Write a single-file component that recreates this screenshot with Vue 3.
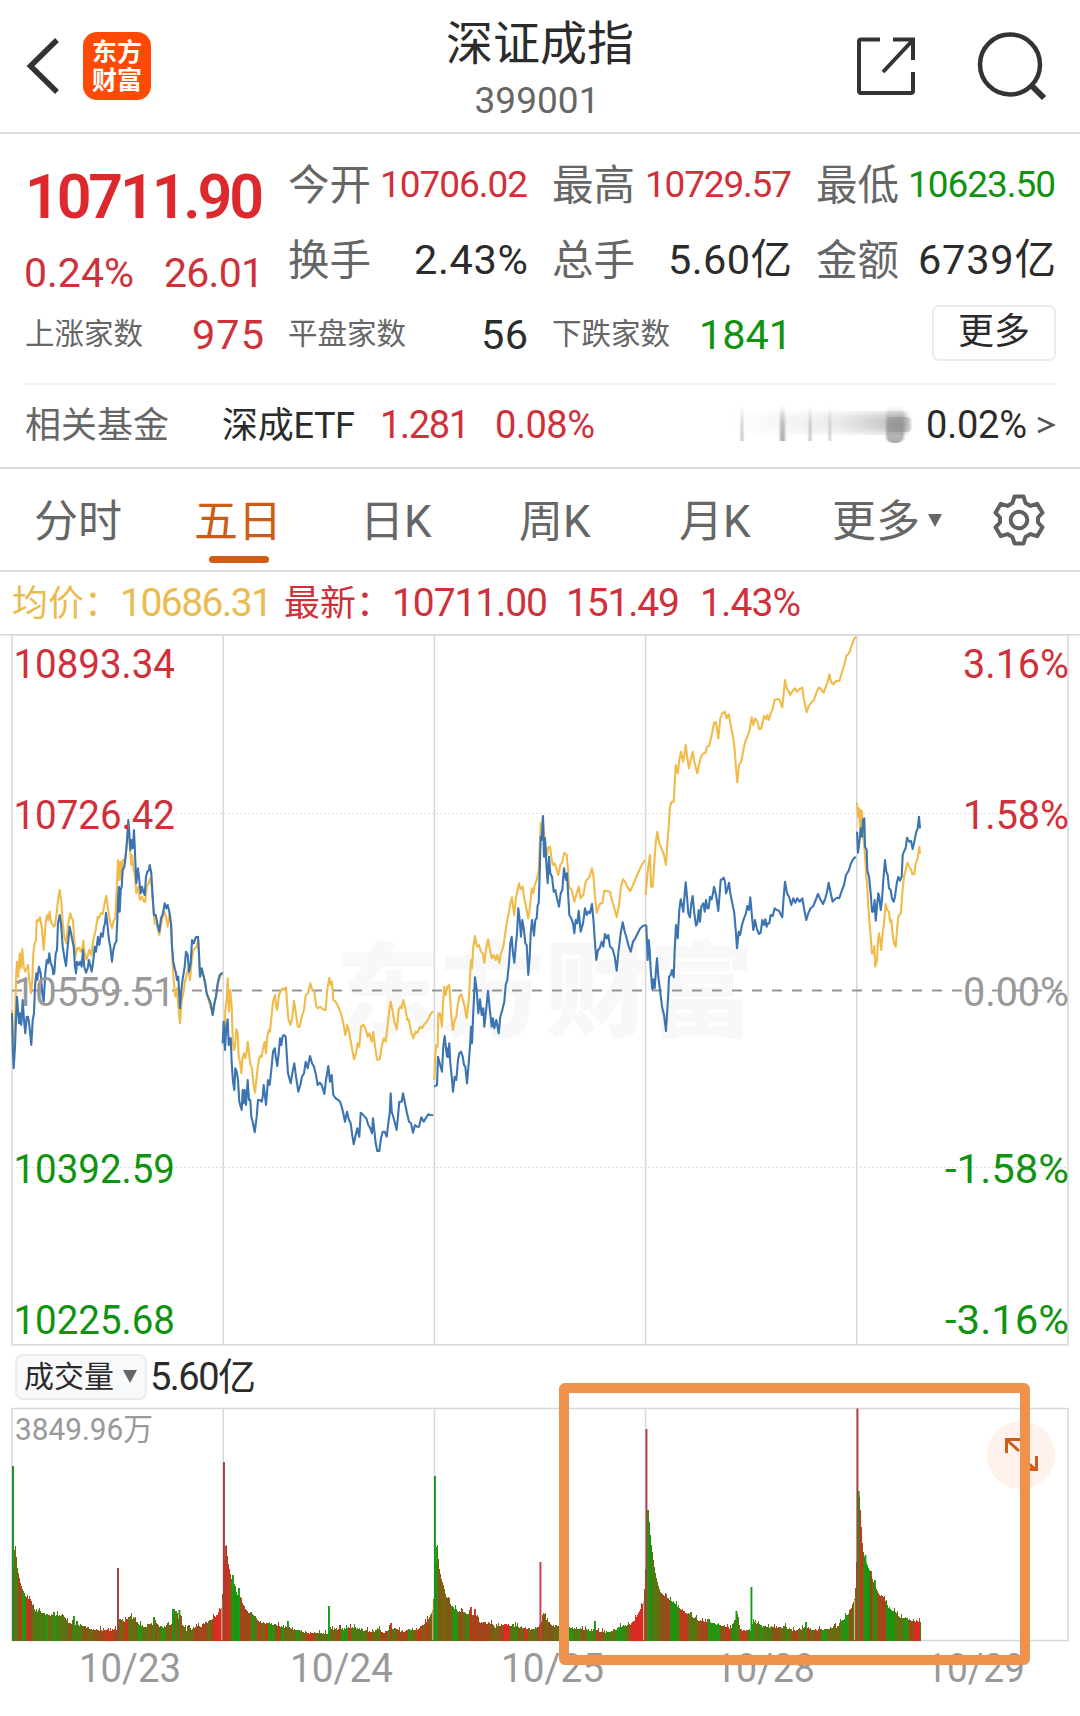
<script setup>
const place = (el, width) => {
  el.style.letterSpacing = '0px'
  el.style.marginRight = '0px'
  const n = Array.from(el.textContent).length
  const extra = (width - el.getBoundingClientRect().width) / (n - 1)
  el.style.letterSpacing = extra + 'px'
  el.style.marginRight = -extra + 'px'
}
// Tracks a run of text so that it fills the given width
const vFit = { mounted: (el, b) => place(el, b.value) }

const quotes = [
  { label: '今开', value: '10706.02', w: 148, tone: 'up', size: 'mid' },
  { label: '最高', value: '10729.57', w: 147, tone: 'up', size: 'mid' },
  { label: '最低', value: '10623.50', w: 148, tone: 'down', size: 'mid' },
  { label: '换手', value: '2.43%', w: 114, tone: '', size: 'big' },
  { label: '总手', value: '5.60亿', w: 124, tone: '', size: 'big' },
  { label: '金额', value: '6739亿', w: 138, tone: '', size: 'big' },
]

const left = 12
const right = 1068
const dayLines = [223.2, 434.4, 645.6, 856.8]

// Each session: origin plus samples in thirds of a pixel
const sessions = [
  {
    ox: 0, oy: 780,
    avg: '36,690 41,850 45,740 48,600 51,545 55,590 59,520 63,565 67,508 71,560 76,575 80,565 84,555 88,600 93,640 97,600 100,520 104,490 108,480 110,420 114,425 120,412 125,440 131,510 137,425 142,405 145,420 149,395 153,425 161,440 165,435 170,400 174,360 179,330 184,365 188,430 193,470 199,490 205,430 211,400 215,415 219,420 222,470 226,530 232,505 238,503 242,515 246,510 250,482 254,520 260,540 267,510 274,525 280,480 287,450 293,410 297,415 302,400 308,402 313,375 319,347 324,385 330,425 336,445 340,425 346,415 350,330 354,240 357,300 361,245 364,300 368,240 374,240 380,200 386,140 391,220 394,255 397,225 400,260 405,290 409,340 415,320 420,360 426,350 432,365 436,365 440,320 446,310 450,295 455,320 460,390 464,430 470,435 478,465 484,430 492,395 498,410 503,440 509,400 514,440 517,530 521,600 526,650 531,625 535,680 540,730 545,660 550,640 556,600 561,580 565,565 570,600 575,540 580,510 590,500 595,480 597,530 600,590 605,570 611,590 620,640 638,705 645,665 653,615 660,590 668,580',
    price: '36,700 38,800 41,865 45,800 48,720 51,650 54,690 57,730 60,700 64,735 68,660 72,720 76,760 80,710 84,710 88,735 94,795 98,720 102,700 105,620 109,580 112,600 117,560 122,580 127,640 131,665 136,580 140,540 144,550 148,520 152,550 157,560 160,583 163,580 167,520 171,510 174,430 179,405 183,430 188,500 193,530 198,558 203,500 209,440 213,460 217,480 221,500 225,560 228,580 231,545 236,555 241,545 245,560 249,510 253,560 258,578 263,565 267,540 275,575 279,550 284,500 288,515 294,470 298,495 303,460 308,470 312,440 315,430 318,398 322,430 327,480 331,500 336,545 340,510 345,490 349,485 352,420 355,340 357,320 359,395 362,330 365,320 368,270 373,260 377,230 381,180 385,120 388,160 391,210 395,180 398,205 402,150 405,220 409,310 414,265 418,300 422,340 426,320 430,335 434,345 438,290 442,275 447,270 449,255 454,280 458,350 462,405 467,405 472,430 478,455 483,415 489,400 494,370 499,385 503,375 508,395 513,430 516,500 520,545 524,565 528,580 531,600 535,590 540,685 545,620 549,590 554,560 558,515 563,525 567,575 572,550 576,480 581,490 587,472 594,470 597,520 600,590 605,565 611,590 616,610 620,640 626,655 632,670 638,705 643,670 648,650 653,610 659,585 668,578',
  },
  {
    ox: 215, oy: 930,
    avg: '26,345 29,300 31,240 35,210 38,145 42,245 46,180 50,230 53,330 56,360 60,350 64,298 68,310 71,380 75,395 79,430 83,380 87,370 91,385 95,365 98,335 102,370 106,400 111,415 115,460 120,488 125,440 129,405 134,378 140,380 145,350 149,335 153,370 157,320 161,300 165,305 169,265 174,215 180,195 184,230 187,240 192,195 197,183 203,175 208,180 213,172 216,215 220,265 226,285 232,265 237,212 242,245 248,290 254,290 260,260 267,240 272,195 279,190 286,160 292,180 298,185 304,230 309,235 315,230 321,235 328,240 332,240 336,185 343,143 347,165 351,155 355,210 362,215 370,230 378,250 385,280 391,315 397,285 403,310 410,350 417,388 423,370 428,340 433,350 438,290 446,285 453,300 458,320 463,310 470,335 475,305 480,350 487,390 494,388 500,350 506,325 512,335 518,285 523,240 527,215 533,245 538,275 545,298 551,240 556,230 560,235 565,210 571,235 577,270 581,268 588,305 595,325 602,305 608,308 615,290 621,295 628,283 635,275 641,265 648,250 655,244',
    price: '23,340 26,275 30,360 34,290 38,268 41,345 44,325 47,325 50,400 54,455 58,480 61,415 65,425 69,450 73,515 80,540 83,480 86,520 89,480 93,525 98,450 102,510 106,510 109,560 113,575 119,607 125,560 129,510 134,510 140,515 143,500 146,465 153,525 159,450 164,465 169,420 174,365 179,355 183,385 187,408 191,370 195,325 199,345 203,318 207,315 212,320 215,370 219,430 227,460 232,430 238,400 243,440 250,485 256,465 261,440 267,430 272,395 278,415 285,378 291,400 297,410 303,435 308,465 314,458 320,465 328,492 333,450 340,408 345,455 350,435 355,495 362,505 370,510 375,515 380,530 385,550 390,575 396,545 402,570 407,580 411,610 416,643 421,620 427,595 433,620 437,548 443,553 449,560 454,565 460,585 466,595 471,610 474,565 478,600 482,640 487,663 493,663 498,625 503,605 509,605 515,620 521,570 524,550 527,490 530,545 535,560 540,580 545,600 549,560 553,515 560,515 564,490 570,520 576,550 582,575 588,580 594,608 600,585 606,590 612,590 619,562 626,575 632,565 640,553 646,555 655,556',
  },
  {
    ox: 425, oy: 790,
    avg: '28,870 31,800 34,765 38,770 40,670 45,670 51,710 54,640 58,590 62,615 67,590 73,585 77,650 80,690 84,720 89,690 94,680 98,645 103,620 109,612 114,630 119,650 125,685 129,650 132,620 135,560 138,510 141,535 145,470 150,438 156,470 162,465 168,485 173,490 178,518 183,480 189,448 194,475 200,505 206,495 212,510 217,495 223,520 228,490 235,470 240,435 246,395 252,365 256,340 261,322 264,350 268,375 273,320 278,300 282,280 287,298 293,290 297,320 303,350 310,385 315,350 320,295 325,310 329,285 335,270 341,240 344,170 347,100 350,130 353,80 358,140 361,160 366,195 370,172 375,170 379,200 383,225 389,220 394,235 400,255 406,225 411,218 418,188 425,195 429,240 432,290 440,300 448,335 455,310 461,290 467,325 475,315 482,275 487,268 493,262 501,235 506,265 510,320 515,368 520,355 526,340 532,340 538,302 545,303 555,305 562,335 568,355 575,382 582,345 588,290 594,268 600,275 606,290 616,303 624,285 632,265 641,245 650,225 660,210',
    price: '28,890 36,885 39,800 44,820 51,845 55,770 59,738 63,775 66,800 68,775 70,802 73,760 76,820 80,860 84,905 89,860 94,870 99,810 103,790 108,785 113,800 117,825 121,830 126,880 131,820 135,770 138,710 141,760 145,665 150,562 155,600 160,670 165,628 170,675 175,655 178,710 184,655 189,602 194,655 200,710 204,685 208,715 214,690 221,730 226,680 232,660 238,635 242,585 247,570 252,520 256,460 260,440 264,490 268,518 273,460 276,430 280,355 284,390 288,440 292,390 297,420 301,460 305,465 310,555 314,500 317,430 321,390 327,437 331,390 335,385 338,345 341,340 344,250 347,140 350,150 354,78 357,200 360,145 364,220 368,280 372,200 376,250 381,260 386,305 391,300 396,325 402,350 407,310 412,300 417,235 423,270 426,250 430,320 433,375 439,385 444,400 448,430 452,390 457,400 461,362 467,425 474,400 480,355 485,375 490,365 495,370 501,342 506,400 510,460 514,510 519,480 524,475 530,455 535,470 540,432 545,445 550,435 555,470 562,475 569,500 575,542 580,490 587,430 593,397 599,425 604,440 610,465 617,485 624,455 631,445 638,430 646,415 655,407 664,405',
  },
  {
    ox: 640, oy: 630,
    avg: '17,795 22,735 25,710 30,675 33,770 38,770 43,700 47,640 52,605 58,640 66,660 72,675 78,705 82,640 86,590 90,530 95,515 101,515 104,460 107,405 113,430 118,390 123,365 129,395 133,375 137,345 142,385 147,415 152,390 158,365 163,395 172,430 178,400 184,378 190,370 196,370 201,350 207,348 213,325 218,300 222,278 228,277 235,325 241,265 247,250 254,245 260,265 266,253 272,285 279,320 284,360 288,415 292,457 297,405 304,395 311,355 317,330 323,318 329,298 335,262 340,285 346,265 352,275 358,298 364,295 372,258 378,268 382,255 386,270 392,250 398,235 404,210 412,207 418,208 427,232 431,190 435,150 440,175 446,183 451,195 458,182 465,175 471,185 478,178 487,173 492,210 500,247 506,228 512,220 522,210 530,185 537,172 543,178 551,188 558,168 563,155 568,133 573,155 580,163 588,153 598,153 605,130 612,108 619,78 627,70 634,50 642,28 648,20',
    price: '19,886 23,990 26,930 29,960 32,1020 37,1078 40,1048 44,1075 48,1020 51,985 55,1040 60,1080 66,1130 72,1155 78,1203 82,1140 85,1090 87,1040 92,1035 96,1020 101,1042 104,960 108,885 113,925 118,840 122,808 126,825 130,845 134,790 137,757 141,800 145,850 150,862 154,820 158,798 163,850 168,887 172,880 176,840 180,875 184,830 190,820 194,845 198,810 202,835 206,835 210,800 215,808 219,790 222,770 228,795 235,843 239,790 242,750 247,748 251,743 255,755 258,790 263,775 267,758 271,790 277,820 283,850 287,900 291,955 296,905 300,915 306,885 312,865 318,850 322,828 327,840 331,802 335,850 340,900 345,870 350,895 357,912 362,908 367,870 372,885 376,868 380,890 384,880 388,880 392,855 398,858 404,835 410,840 417,842 427,862 431,800 435,755 441,790 447,800 454,825 460,805 466,818 472,805 479,815 487,805 493,840 499,870 505,850 512,835 520,828 527,810 534,792 541,808 549,822 556,805 560,790 566,758 572,790 578,815 584,808 592,803 598,805 606,780 612,765 618,735 626,722 633,700 640,687 647,680',
  },
  {
    ox: 840, oy: 780,
    avg: '51,68 54,110 57,85 60,150 63,90 66,95 68,150 72,190 76,240 79,290 82,320 85,380 88,420 92,470 96,520 101,520 103,498 106,560 111,540 114,480 117,460 120,480 124,510 128,455 132,430 137,372 141,390 147,395 150,425 154,420 158,465 162,490 167,500 171,450 175,410 183,398 187,340 192,290 197,270 202,248 208,260 213,268 217,283 223,283 227,250 233,235 238,200 240,222',
    price: '51,155 54,218 58,190 61,155 63,145 66,170 69,120 73,115 75,200 80,210 82,270 87,290 92,340 96,395 100,395 104,360 107,422 111,380 115,340 118,350 122,390 126,360 130,300 135,240 139,275 143,285 147,325 152,330 156,355 161,365 165,350 170,310 175,290 180,302 185,290 188,225 193,212 197,205 201,173 208,185 213,183 218,207 223,185 229,155 233,145 237,110 240,145',
  },
]
const trace = (s, key) =>
  s[key].split(' ').map((p) => {
    const [x, y] = p.split(',').map(Number)
    return (s.ox + x / 3).toFixed(1) + ',' + (s.oy + y / 3).toFixed(1)
  }).join(' ')

const levels = [
  { y: 677.5, price: '10893.34', pct: '3.16%', c: '#d0303a' },
  { y: 829, price: '10726.42', pct: '1.58%', c: '#d0303a' },
  { y: 1006, price: '10559.51', pct: '0.00%', c: '#999' },
  { y: 1183, price: '10392.59', pct: '-1.58%', c: '#109410' },
  { y: 1334, price: '10225.68', pct: '-3.16%', c: '#109410' },
]

// Volume envelope: x, height
const envelope = [
  12, 66, 14, 100, 15, 90, 16.5, 73, 18, 66, 20, 56, 23, 49, 26, 42, 30, 41, 33, 32, 42, 27, 50, 25, 62, 26, 66, 19, 76, 16, 85, 14, 92, 11, 117, 11,
  119, 24, 121, 18, 130, 24, 142, 14, 150, 13, 154, 20, 158, 14, 165, 14, 171, 16, 173, 29, 176, 26, 178, 20, 180, 27, 181, 16, 185, 11, 199, 14, 207, 19, 217, 26, 221, 35,
  222, 60, 225, 102, 227, 80, 229, 70, 232, 54, 234, 58, 236, 46, 239, 46, 241, 37, 246, 29, 252, 27, 258, 19, 270, 17, 280, 14, 288, 14, 295, 11, 304, 8, 328, 7,
  330, 11, 352, 13, 362, 11, 372, 8, 377, 12, 383, 7, 390, 13, 400, 9, 418, 12, 424, 17, 430, 27, 432, 32,
  433, 50, 436, 103, 438, 75, 440, 64, 443, 54, 445, 45, 450, 36, 458, 29, 474, 26, 478, 19, 490, 17, 495, 13, 505, 17, 530, 11, 540, 15,
  541.5, 25, 543, 28, 546, 20, 550, 15, 570, 13, 600, 9, 610, 9, 620, 14, 630, 16, 636, 24, 640, 32, 643, 42,
  644, 62, 647.5, 131, 650, 100, 652, 85, 654, 70, 657, 57, 660, 48, 666, 43, 674, 37, 684, 29, 695, 22, 705, 18, 720, 16, 730, 12, 736, 25, 740, 11, 750, 10,
  752, 18, 760, 15, 770, 13, 784, 14, 792, 10, 805, 13, 815, 10, 828, 12, 836, 14, 842, 21, 848, 28, 854, 42,
  855, 65, 858, 150, 860, 125, 861, 103, 863, 85, 868, 72, 873, 58, 878, 47, 884, 41, 887, 34, 893, 30, 899, 23, 904, 23, 912, 20, 922, 19,
]
const peaks = [
  [13, 175, '#168c1c'], [118, 73, '#a13b3b'], [224, 179, '#a33a3c'], [329, 35, '#149c14'], [435, 165, '#12961a'],
  [540.5, 79, '#d0383c'], [646.5, 212, '#b93a3c'], [751.5, 54, '#149c14'], [857.5, 232.5, '#b53a3a'],
  [648, 131, '#2a8f1c'], [858.7, 150, '#2a8f1c'],
  [74, 25, '#149c14'], [154, 24, '#149c14'], [173, 32, '#149c14'], [176, 30, '#149c14'], [179.5, 31, '#149c14'],
  [233, 66, '#149c14'], [239, 53, '#149c14'], [288, 20, '#149c14'],
  [391, 18, '#c0331e'], [471, 34, '#d32a22'], [475, 32, '#c0331e'], [595, 20, '#149c14'], [736.5, 30, '#149c14'],
  [865.5, 86, '#149c14'], [871, 70, '#8a4a16'], [875, 61, '#149c14'], [884, 44, '#b53a1e'], [806, 19, '#149c14'],
]
let seed = 11
const rand = () => ((seed = (seed * 16807) % 2147483647) / 2147483647)
const heightAt = (x) => {
  for (let i = 2; i < envelope.length; i += 2) {
    if (x <= envelope[i]) {
      const t = (x - envelope[i - 2]) / (envelope[i] - envelope[i - 2])
      return envelope[i - 1] + t * (envelope[i + 1] - envelope[i - 1])
    }
  }
  return 19
}
const palette = ['#6d6b12', '#8c5316', '#4a7d10', '#c4371d', '#259411', '#73660f', '#a2471b', '#5f7012']
const reds = [[213, 221], [503, 509], [631, 642], [740, 744], [855, 861], [913, 919]]
const greens = [[230, 239], [648, 651], [669, 675], [730, 734], [863, 869], [885, 893]]
const within = (list, x) => list.some(([a, b]) => x >= a && x <= b)
const bars = []
let tone = palette[0]
let run = 0
for (let x = 11.5; x < 920; x += 1) {
  if (run-- <= 0) {
    tone = palette[Math.floor(rand() * palette.length)]
    run = Math.floor(rand() * 6) + 1
  }
  const h = heightAt(x)
  const jitter = h < 45 ? (rand() < 0.15 ? 4 : rand() * 2.5 - 0.8) : 0
  const c = within(reds, x) ? '#dc2c22' : within(greens, x) ? '#1c920f' : tone
  bars.push({ x, h: h + jitter, c })
}
const dates = [
  [81, '10/23', 99], [292, '10/24', 100], [503, '10/25', 100], [717, '10/28', 97], [928, '10/29', 96],
]
</script>

<template>
  <div class="page">
    <header class="top">
      <div class="brand">
        <svg width="34" height="58" viewBox="0 0 34 58"><path d="M31 3 4.500 29 31 55" fill="none" stroke="#333" stroke-width="5.500" /></svg>
        <div class="logo"><span>东方</span><span>财富</span></div>
      </div>
      <div class="title">
        <h1>深证成指</h1>
        <span v-fit="125">399001</span>
      </div>
      <div class="tools">
        <svg width="60" height="60" viewBox="0 0 60 60" fill="none" stroke="#333" stroke-width="4">
          <path d="M24 3.500H5Q3 3.500 3 5.500V55Q3 57 5 57H55Q57 57 57 55V36" />
          <path d="M37 3.500H57V24M56 5 27 36" />
        </svg>
        <svg width="70" height="70" viewBox="0 0 70 70" fill="none" stroke="#333" stroke-width="4.500"><circle cx="33" cy="33.500" r="30" /><path d="M54 54 67 67" stroke-width="6" /></svg>
      </div>
    </header>

    <section class="quote">
      <div class="lead">
        <b v-fit="239">10711.90</b>
        <div class="change up"><span v-fit="110">0.24%</span><span v-fit="100">26.01</span></div>
      </div>
      <div v-for="q in quotes" :key="q.label" class="cell">
        <span class="label">{{ q.label }}</span>
        <span v-fit="q.w" :class="[q.size, q.tone]">{{ q.value }}</span>
      </div>
      <div class="cell counts"><span class="small">上涨家数</span><span v-fit="72" class="big up">975</span></div>
      <div class="cell counts"><span class="small">平盘家数</span><span v-fit="47" class="big">56</span></div>
      <div class="cell counts"><span class="small">下跌家数</span><span v-fit="93" class="big down">1841</span></div>
      <div class="cell end"><button class="more">更多</button></div>
    </section>

    <section class="fund">
      <span class="fname">相关基金</span>
      <span v-fit="133" class="etf">深成ETF</span>
      <span v-fit="90" class="up n1">1.281</span>
      <span v-fit="100" class="up n2">0.08%</span>
      <svg class="smear" width="190" height="40" viewBox="0 0 190 40">
        <defs>
          <linearGradient id="sm"><stop offset="0" stop-color="#999" stop-opacity="0" /><stop offset=".6" stop-color="#999" stop-opacity=".2" /><stop offset="1" stop-color="#888" stop-opacity=".6" /></linearGradient>
          <linearGradient id="sv" x1="0" y1="0" x2="0" y2="1"><stop offset="0" stop-color="#888" stop-opacity="0" /><stop offset=".5" stop-color="#888" stop-opacity=".5" /><stop offset="1" stop-color="#888" stop-opacity=".7" /></linearGradient>
          <filter id="bl"><feGaussianBlur stdDeviation="2 4" /></filter>
          <filter id="bs"><feGaussianBlur stdDeviation=".8 .3" /></filter>
        </defs>
        <rect x="10" y="8" width="174" height="20" fill="url(#sm)" filter="url(#bl)" />
        <g filter="url(#bs)">
          <path d="M18 2h2v34h-2zM57 0h5v36h-5zM86 2h2v34h-2zM106 2h1.500v34h-1.500z" fill="url(#sv)" />
          <rect x="163" y="0" width="18" height="38" rx="7" fill="url(#sv)" />
          <rect x="164" y="12" width="24" height="15" rx="4" fill="#888" opacity=".4" />
        </g>
      </svg>
      <span v-fit="101" class="n3">0.02%</span>
      <svg width="20" height="22" viewBox="0 0 20 22"><path d="M2 4 17 11 2 18" fill="none" stroke="#555" stroke-width="2.500" /></svg>
    </section>

    <nav class="tabs">
      <span class="t1">分时</span>
      <span class="t2 on">五日</span>
      <span class="t3">日K</span>
      <span class="t4">周K</span>
      <span class="t5">月K</span>
      <span class="t6">更多<i class="tri"></i></span>
      <svg width="56" height="56" viewBox="0 0 56 56" fill="none" stroke="#606060" stroke-width="4" stroke-linejoin="round">
        <path d="M23.500 4.500h9l2 6.500 5 2.900 6.700-2 5.300 8.800-4.500 4.800v5l4.500 4.800-5.300 8.800-6.700-2-5 2.900-2 6.500h-9l-2-6.500-5-2.900-6.700 2-5.300-8.800 4.500-4.800v-5l-4.500-4.800 5.300-8.800 6.700 2 5-2.900z" />
        <circle cx="28" cy="28" r="8.300" />
      </svg>
    </nav>

    <section class="legend">
      <span class="avg name">均价：</span><span v-fit="153" class="avg">10686.31</span>
      <span class="up name latest">最新：</span><span v-fit="156" class="up">10711.00</span>
      <span v-fit="114" class="up chg">151.49</span><span v-fit="101" class="up pct">1.43%</span>
    </section>

    <svg class="trend" width="1080" height="713" viewBox="0 634 1080 713">
      <text x="336" y="1029" textLength="418" lengthAdjust="spacingAndGlyphs" font-size="104" font-weight="900" fill="#f8f8f8">东方财富</text>
      <g stroke="#d8d8d8" stroke-width="1.500" fill="none">
        <path d="M0 634.800H1080" />
        <rect :x="left" y="634.800" :width="right - left" height="710" />
        <path v-for="x in dayLines" :key="x" :d="`M${x} 634V1344`" />
        <path d="M12 813.500H1068M12 1167.500H1068" stroke="#dedede" stroke-width="1" stroke-dasharray="2 2" />
      </g>
      <path d="M12 990.500H1068" stroke="#949494" stroke-width="2.200" stroke-dasharray="10 10" />
      <g fill="none" stroke-width="2.100" stroke-linejoin="round">
        <polyline v-for="s in sessions" :key="'a' + s.ox" :points="trace(s, 'avg')" stroke="#f0bb4a" />
        <polyline v-for="s in sessions" :key="'p' + s.ox" :points="trace(s, 'price')" stroke="#3b74b0" />
      </g>
      <g font-size="40.500">
        <template v-for="l in levels" :key="l.y">
          <text x="13.500" :y="l.y" :fill="l.c" textLength="161.500" lengthAdjust="spacingAndGlyphs">{{ l.price }}</text>
          <text :x="l.pct[0] === '-' ? 945 : 963" :y="l.y" :fill="l.c" :textLength="l.pct[0] === '-' ? 124 : 106" lengthAdjust="spacingAndGlyphs">{{ l.pct }}</text>
        </template>
      </g>
    </svg>

    <div class="volhead">
      <div class="chip">成交量<i class="tri"></i></div>
      <span v-fit="106">5.60亿</span>
    </div>

    <svg class="volume" width="1080" height="310" viewBox="0 1406 1080 310">
      <g stroke="#d8d8d8" stroke-width="1.500" fill="none">
        <rect :x="left" y="1408.500" :width="right - left" height="232" />
        <path v-for="x in dayLines" :key="x" :d="`M${x} 1408V1641`" />
      </g>
      <g shape-rendering="crispEdges">
        <rect v-for="b in bars" :key="b.x" :x="b.x" :y="1641 - b.h" width="1.200" :height="b.h" :fill="b.c" />
      </g>
      <rect v-for="p in peaks" :key="p[0]" :x="p[0] - 1" :y="1641 - p[1]" width="1.900" :height="p[1]" :fill="p[2]" />
      <path d="M221.800 1600v40M432.800 1600v40M643.600 1600v40M854.600 1600v40" stroke="#f4dcc8" stroke-width=".8" />
      <text x="15" y="1440" font-size="31" fill="#999" textLength="138" lengthAdjust="spacingAndGlyphs">3849.96万</text>
      <text v-for="d in dates" :key="d[1]" :x="d[0] - 2" y="1682" font-size="40.500" fill="#999" :textLength="d[2] + 3" lengthAdjust="spacingAndGlyphs">{{ d[1] }}</text>
      <circle cx="1021" cy="1455" r="34" fill="#fff1eb" />
      <path d="M1006.500 1453V1439.500H1020M1007 1440 1019 1451M1024 1460 1036 1470M1036.500 1456V1469.500H1023" fill="none" stroke="#cf5a1a" stroke-width="3" />
    </svg>
    <div class="marker"></div>
  </div>
</template>

<style>
body { margin: 0; background: #fff; }
</style>
<style scoped>
.page { position: relative; width: 1080px; height: 1716px; overflow: hidden; background: #fff; color: #2b2b2b; font-family: Roboto, "Noto Sans CJK SC", sans-serif; line-height: 1; }
.page span { white-space: nowrap; }
svg { display: block; flex: none; }
.up { color: #d0303a; }
.down { color: #109410; }
.top { box-sizing: border-box; height: 134px; border-bottom: 2px solid #dcdcdc; display: grid; grid-template-columns: 1fr 200px 1fr; }
.brand { display: flex; align-items: center; gap: 23px; padding-left: 26px; }
.logo { width: 68px; height: 68px; border-radius: 14px; background: #fd4a05; color: #fff; font-size: 25px; font-weight: 700; display: flex; flex-direction: column; align-items: center; justify-content: center; gap: 3px; }
.title { display: flex; flex-direction: column; align-items: center; padding-top: 20px; }
.title h1 { margin: 0; font-size: 47px; font-weight: 400; white-space: nowrap; }
.title span { font-size: 37px; color: #666; margin-top: 15px; position: relative; left: -3px; }
.tools { display: flex; align-items: center; justify-content: flex-end; gap: 61px; padding-right: 33px; }
.quote { display: grid; grid-template-columns: 239px 240px 240px 240px; column-gap: 24px; grid-template-rows: 75px 75px 75px; padding: 13px 24px 0 25px; height: 237px; box-sizing: border-box; }
.lead { grid-row: span 2; display: flex; flex-direction: column; }
.lead b { align-self: flex-start; font-size: 61px; font-weight: 600; color: #dd292e; margin-top: 20px; }
.change { display: flex; justify-content: space-between; font-size: 41px; margin-top: 25px; margin-left: -1px; }
.cell { display: flex; align-items: center; justify-content: space-between; }
.label { font-size: 41.5px; color: #666; padding-top: 3px; }
.small { font-size: 29.5px; color: #666; }
.mid { font-size: 37px; }
.big { font-size: 41.5px; }
.counts { padding-top: 0; }
.end { justify-content: flex-end; }
.more { width: 124px; height: 56px; border: 2px solid #ececec; border-radius: 7px; background: #fff; color: #2b2b2b; font: 36px/1 Roboto, "Noto Sans CJK SC", sans-serif; padding: 0 0 2px; margin-bottom: 3px; }
.fund { box-sizing: border-box; margin: 12px 0 0; height: 86px; border-bottom: 2px solid #dcdcdc; display: flex; align-items: center; padding: 0 24px 0 25px; font-size: 38px; background: linear-gradient(#f3f3f3, #f3f3f3) 25px 0 / 1030px 2px no-repeat; }
.fname { font-size: 36px; color: #666; width: 197px; padding-top: 1px; }
.etf { font-size: 36px; padding-top: 1px; }
.n1 { margin-left: 25px; }
.n2 { margin-left: 25px; }
.smear { margin-left: auto; }
.n3 { margin-left: 13px; }
.fund > svg:last-child { margin-left: 9px; }
.tabs { box-sizing: border-box; height: 103px; border-bottom: 2px solid #dcdcdc; display: grid; grid-template-columns: 160px 166px 159px 160px 153px 159px 56px; align-items: center; padding-left: 34px; font-size: 44px; color: #666; }
.tabs span { position: relative; padding-top: 4px; }
.on { color: #cf5c16; }
.on::after { content: ""; position: absolute; left: 15px; top: 60px; width: 60px; height: 7px; border-radius: 4px; background: #cf5c16; }
.tri { display: inline-block; border: 7.500px solid transparent; border-top: 13px solid #666; border-bottom: 0; vertical-align: 10px; margin-left: 8px; }
.legend { height: 62px; display: flex; align-items: center; padding-left: 12px; font-size: 39px; }
.legend span { flex: none; }
.legend .name { font-size: 36px; width: 108px; padding-top: 1px; }
.avg { color: #eabb50; }
.legend .latest { margin-left: 11px; }
.chg { margin-left: 18px; }
.pct { margin-left: 20px; }
.volhead { height: 59px; display: flex; align-items: center; padding-left: 15px; gap: 3px; font-size: 38px; }
.chip { box-sizing: border-box; width: 132px; height: 46px; border: 2px solid #ececee; border-radius: 8px; background: #f8f9fb; font-size: 30px; display: flex; align-items: center; padding-left: 7px; }
.chip .tri { margin-left: 9px; }
.trend, .volume { font-family: Roboto, "Noto Sans CJK SC", sans-serif; }
.marker { position: absolute; left: 559px; top: 1383px; width: 471px; height: 282px; box-sizing: border-box; border: 10px solid #ee924c; border-radius: 6px; }
</style>
